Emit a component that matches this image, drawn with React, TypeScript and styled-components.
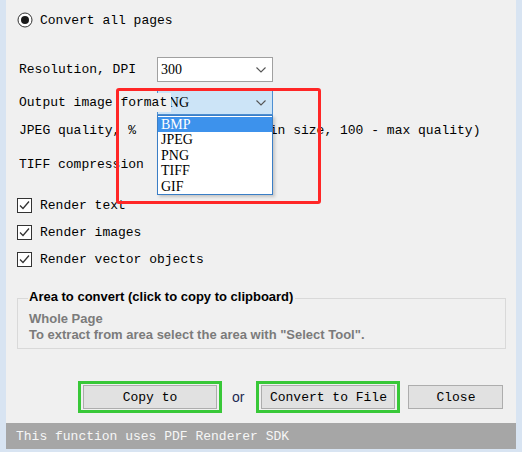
import { FC } from 'react';
import { createGlobalStyle, styled } from 'styled-components';

const GlobalStyle = createGlobalStyle`
  html, body {
    margin: 0;
    padding: 0;
    background: #d8e4f2;
  }
  body {
    width: 522px;
    height: 452px;
    overflow: hidden;
    font-family: 'Liberation Mono', monospace;
  }
`;

const formats = ['BMP', 'JPEG', 'PNG', 'TIFF', 'GIF'];

const Chevron: FC = () => (
  <svg width="10" height="6" viewBox="0 0 10 6">
    <polyline points="0.5,0.5 5,5 9.5,0.5" fill="none" stroke="#555" strokeWidth="1.1" />
  </svg>
);

const RadioIcon: FC = () => (
  <svg width="16" height="16" viewBox="0 0 16 16">
    <circle cx="8" cy="8" r="7" fill="#fff" stroke="#333" strokeWidth="1" />
    <circle cx="8" cy="8" r="4" fill="#1a1a1a" />
  </svg>
);

const CheckIcon: FC = () => (
  <svg width="15" height="15" viewBox="0 0 15 15">
    <rect x="0.5" y="0.5" width="14" height="14" fill="#fff" stroke="#333" />
    <polyline points="3,7.5 6,10.5 12,3.5" fill="none" stroke="#333" strokeWidth="1.3" />
  </svg>
);

const Combo: FC<{ value: string; $active?: boolean; open?: boolean }> = ({ value, $active, open }) => (
  <S.ComboWrap>
    <S.ComboBox $active={$active}>
      <span>{value}</span>
      <Chevron />
    </S.ComboBox>
    {open && (
      <S.DropList>
        {formats.map((f, i) => (
          <S.DropItem key={f} $selected={i === 0}>
            {f}
          </S.DropItem>
        ))}
      </S.DropList>
    )}
  </S.ComboWrap>
);

const App: FC = () => {
  return (
    <>
      <GlobalStyle />
      <S.Screen>
        <S.Window>
          <S.Body>
            <S.RadioRow>
              <RadioIcon />
              <span>Convert all pages</span>
            </S.RadioRow>

            <S.FormRow $top={29}>
              <S.Label>Resolution, DPI</S.Label>
              <Combo value="300" />
            </S.FormRow>

            <S.FormRow $top={8} $raised>
              <S.Label $front>
                <S.LabelText>Output image format</S.LabelText>
              </S.Label>
              <Combo value="PNG" $active open />
            </S.FormRow>

            <S.FormRow $top={3}>
              <S.Label>JPEG quality, %</S.Label>
              <S.NumInput />
              <S.Hint>(0 - min size, 100 - max quality)</S.Hint>
            </S.FormRow>

            <S.FormRow $top={9}>
              <S.Label>TIFF compression</S.Label>
              <Combo value="" />
            </S.FormRow>

            <S.CheckRow $top={21}>
              <CheckIcon />
              <span>Render text</span>
            </S.CheckRow>
            <S.CheckRow $top={12}>
              <CheckIcon />
              <span>Render images</span>
            </S.CheckRow>
            <S.CheckRow $top={12}>
              <CheckIcon />
              <span>Render vector objects</span>
            </S.CheckRow>

            <S.Group>
              <S.Legend>Area to convert (click to copy to clipboard)</S.Legend>
              <S.GroupLine $first>Whole Page</S.GroupLine>
              <S.GroupLine>To extract from area select the area with "Select Tool".</S.GroupLine>
            </S.Group>

            <S.ButtonRow>
              <S.Highlight>
                <S.Button>Copy to</S.Button>
              </S.Highlight>
              <S.Or>or</S.Or>
              <S.Highlight>
                <S.Button>Convert to File</S.Button>
              </S.Highlight>
              <S.Button $narrow>Close</S.Button>
            </S.ButtonRow>
          </S.Body>
          <S.StatusBar>This function uses PDF Renderer SDK</S.StatusBar>
          <S.RedMark />
        </S.Window>
      </S.Screen>
    </>
  );
};

const S = {
  Screen: styled.div`
    display: flex;
    padding-left: 6px;
    width: 516px;
    height: 452px;
  `,

  Window: styled.div`
    position: relative;
    display: flex;
    flex-direction: column;
    width: 510px;
    height: 449px;
    background: #f0f0f0;
    color: #000;
    font-size: 13px;
  `,

  Body: styled.div`
    flex: 1;
    display: flex;
    flex-direction: column;
    padding: 0 10px 0 11px;
  `,

  RadioRow: styled.div`
    display: flex;
    align-items: center;
    gap: 7px;
    height: 16px;
    margin-top: 12px;
    white-space: nowrap;
  `,

  FormRow: styled.div<{ $top: number; $raised?: boolean }>`
    display: flex;
    align-items: center;
    height: 25px;
    margin-top: ${p => p.$top}px;
    padding-left: 2px;
    white-space: nowrap;
    position: relative;
    z-index: ${p => (p.$raised ? 3 : 'auto')};
  `,

  Label: styled.div<{ $front?: boolean }>`
    width: 138px;
    flex-shrink: 0;
    position: ${p => (p.$front ? 'relative' : 'static')};
    z-index: ${p => (p.$front ? 2 : 'auto')};
  `,

  LabelText: styled.span`
    background: #f0f0f0;
    padding: 2px 4px 2px 0;
  `,

  ComboWrap: styled.div`
    position: relative;
    flex-shrink: 0;
  `,

  ComboBox: styled.div<{ $active?: boolean }>`
    box-sizing: border-box;
    display: flex;
    align-items: center;
    justify-content: space-between;
    width: 116px;
    height: 25px;
    padding: 0 6px 0 3px;
    background: ${p => (p.$active ? '#cce4f7' : '#fff')};
    border: 1px solid ${p => (p.$active ? '#4d8fd3' : '#a0a0a0')};
    font-family: 'Liberation Serif', serif;
    font-size: 14px;
  `,

  DropList: styled.div`
    position: absolute;
    top: 100%;
    left: 0;
    box-sizing: border-box;
    width: 116px;
    height: 80px;
    padding-top: 1px;
    background: #fff;
    border: 1px solid #3a7ec6;
    box-shadow: 2px 2px 3px rgba(0, 0, 0, 0.18);
    font-family: 'Liberation Serif', serif;
    font-size: 14px;
  `,

  DropItem: styled.div<{ $selected?: boolean }>`
    height: 15.4px;
    line-height: 15.4px;
    padding-left: 3px;
    background: ${p => (p.$selected ? '#3d92ec' : 'transparent')};
    color: ${p => (p.$selected ? '#fff' : '#000')};
  `,

  NumInput: styled.div`
    box-sizing: border-box;
    width: 60px;
    height: 24px;
    background: #fff;
    border: 1px solid #a0a0a0;
    flex-shrink: 0;
  `,

  Hint: styled.span`
    margin-left: 6px;
  `,

  CheckRow: styled.div<{ $top: number }>`
    display: flex;
    align-items: center;
    gap: 8px;
    height: 15px;
    margin-top: ${p => p.$top}px;
    white-space: nowrap;
  `,

  Group: styled.div`
    display: flex;
    flex-direction: column;
    align-items: flex-start;
    margin-top: 31px;
    padding: 0 10px 5px 11px;
    border: 1px solid #d9d9d9;
    font-family: 'Liberation Sans', Arial, sans-serif;
    font-size: 13px;
    font-weight: bold;
    line-height: 16px;
  `,

  Legend: styled.div`
    margin: -10px 0 0 -1px;
    padding: 0 2px 0 1px;
    background: #f0f0f0;
    color: #000;
  `,

  GroupLine: styled.div<{ $first?: boolean }>`
    margin-top: ${p => (p.$first ? 6 : 0)}px;
    color: #7b7b7b;
  `,

  ButtonRow: styled.div`
    display: flex;
    align-items: center;
    height: 32px;
    margin-top: 32px;
    padding-left: 61px;
  `,

  Highlight: styled.div`
    display: flex;
    padding: 1px 2px;
    border: 3px solid #38c838;
  `,

  Button: styled.div<{ $narrow?: boolean }>`
    box-sizing: border-box;
    display: flex;
    align-items: center;
    justify-content: center;
    width: ${p => (p.$narrow ? 95 : 134)}px;
    height: 24px;
    margin-left: ${p => (p.$narrow ? 8 : 0)}px;
    background: #e1e1e1;
    border: 1px solid #adadad;
    white-space: nowrap;
  `,

  Or: styled.span`
    margin: 0 12px 0 10px;
    font-family: 'Liberation Sans', Arial, sans-serif;
    font-size: 14px;
    color: #1c2a50;
  `,

  StatusBar: styled.div`
    display: flex;
    align-items: center;
    height: 26px;
    padding-left: 10px;
    background: #a6a6a6;
    color: #f6f6f6;
    white-space: nowrap;
  `,

  RedMark: styled.div`
    position: absolute;
    left: 110px;
    top: 88px;
    width: 205px;
    height: 116px;
    box-sizing: border-box;
    border: 3px solid #ff2626;
    border-radius: 3px;
    pointer-events: none;
    z-index: 5;
  `,
};

export default App;
